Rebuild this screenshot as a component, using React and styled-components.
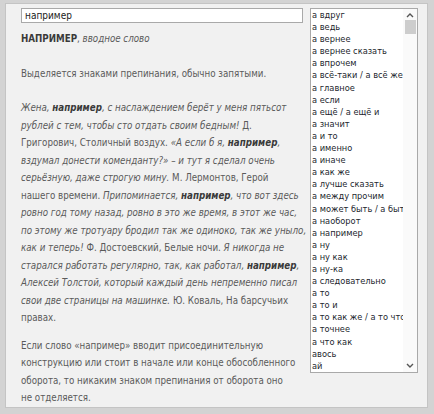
import React from 'react'
import styled, { createGlobalStyle } from 'styled-components'

const GlobalStyle = createGlobalStyle`
  html, body {
    margin: 0;
    padding: 0;
    background: #d3d3d3;
  }
  body {
    width: 434px;
    height: 414px;
    overflow: hidden;
  }
`

const words = [
  'а вдруг', 'а ведь', 'а вернее', 'а вернее сказать', 'а впрочем',
  'а всё-таки / а всё же', 'а главное', 'а если', 'а ещё / а ещё и', 'а значит',
  'а и то', 'а именно', 'а иначе', 'а как же', 'а лучше сказать',
  'а между прочим', 'а может быть / а быть может', 'а наоборот', 'а например', 'а ну',
  'а ну как', 'а ну-ка', 'а следовательно', 'а то', 'а то и',
  'а то как же / а то что же', 'а точнее', 'а что как', 'авось', 'ай',
]

const App = () => {
  return (
    <>
      <GlobalStyle />
      <StyledFrame>
        <div className="panel">
          <div className="article">
            <input className="search" defaultValue="например" />
            <p className="title">
              <b>НАПРИМЕР</b>, <i>вводное слово</i>
            </p>
            <p className="lead">Выделяется знаками препинания, обычно запятыми.</p>
            <p className="examples">
              <i>Жена, <b>например</b>, с наслаждением берёт у меня пятьсот<br />
              рублей с тем, чтобы сто отдать своим бедным!</i> Д.<br />
              Григорович, Столичный воздух. <i>«А если б я, <b>например</b>,<br />
              вздумал донести коменданту?» – и тут я сделал очень<br />
              серьёзную, даже строгую мину.</i> М. Лермонтов, Герой<br />
              нашего времени. <i>Припоминается, <b>например</b>, что вот здесь<br />
              ровно год тому назад, ровно в это же время, в этот же час,<br />
              по этому же тротуару бродил так же одиноко, так же уныло,<br />
              как и теперь!</i> Ф. Достоевский, Белые ночи. <i>Я никогда не<br />
              старался работать регулярно, так, как работал, <b>например</b>,<br />
              Алексей Толстой, который каждый день непременно писал<br />
              свои две страницы на машинке.</i> Ю. Коваль, На барсучьих<br />
              правах.
            </p>
            <p className="note">
              Если слово «например» вводит присоединительную<br />
              конструкцию или стоит в начале или конце обособленного<br />
              оборота, то никаким знаком препинания от оборота оно<br />
              не отделяется.
            </p>
          </div>
          <div className="listbox">
            <ul className="items">
              {words.map((w) => (
                <li key={w}>{w}</li>
              ))}
            </ul>
            <div className="scrollbar">
              <svg width="8" height="6" viewBox="0 0 8 6">
                <path d="M1 5 L4 2 L7 5" fill="none" stroke="#555" strokeWidth="1.4" />
              </svg>
              <div className="thumb" />
              <div className="track" />
              <svg width="8" height="6" viewBox="0 0 8 6">
                <path d="M1 1 L4 4 L7 1" fill="none" stroke="#555" strokeWidth="1.4" />
              </svg>
            </div>
          </div>
        </div>
      </StyledFrame>
    </>
  )
}

export default App

const StyledFrame = styled.div`
  padding: 3px 6px 6px 5px;
  height: 414px;
  box-sizing: border-box;

  .panel {
    height: 100%;
    box-sizing: border-box;
    background: #f1f1f1;
    border: 1px solid #c4c4c4;
    padding: 4px 0 0 15px;
    display: flex;
    align-items: flex-start;
  }

  .article {
    width: 289px;
    font-family: "DejaVu Sans Condensed", "DejaVu Sans", sans-serif;
    font-size: 9.7px;
    line-height: 17.5px;
    color: #5a5a5a;

    p {
      margin: 0;
      white-space: nowrap;
    }
    b {
      color: #3a3a3a;
    }
  }

  .search {
    display: block;
    width: 282px;
    height: 15px;
    box-sizing: border-box;
    border: 1px solid #a9a9a9;
    background: #fff;
    padding: 0 3px;
    margin: 0 0 7px 0;
    font-family: "DejaVu Sans Condensed", "DejaVu Sans", sans-serif;
    font-size: 10px;
    color: #222;
    outline: none;
  }

  .title {
    margin-bottom: 17px !important;
  }
  .lead {
    margin-bottom: 17px !important;
  }
  .examples {
    margin-bottom: 10px !important;
  }

  .listbox {
    width: 108px;
    height: 365px;
    box-sizing: border-box;
    border: 1px solid #a9a9a9;
    background: #fff;
    display: flex;
    overflow: hidden;
  }

  .items {
    flex: 1;
    min-width: 0;
    list-style: none;
    margin: 0;
    padding: 0 0 0 1px;
    overflow: hidden;
    font-family: "DejaVu Sans Condensed", "DejaVu Sans", sans-serif;
    font-size: 9.2px;
    line-height: 12.1px;
    color: #231f2e;

    li {
      white-space: nowrap;
    }
  }

  .scrollbar {
    width: 14px;
    display: flex;
    flex-direction: column;
    align-items: center;
    padding: 3px 0 3px;
    gap: 2px;
    background: #fafafa;
  }

  .thumb {
    width: 11px;
    height: 14px;
    background: #cdcdcd;
  }

  .track {
    flex: 1;
  }
`
